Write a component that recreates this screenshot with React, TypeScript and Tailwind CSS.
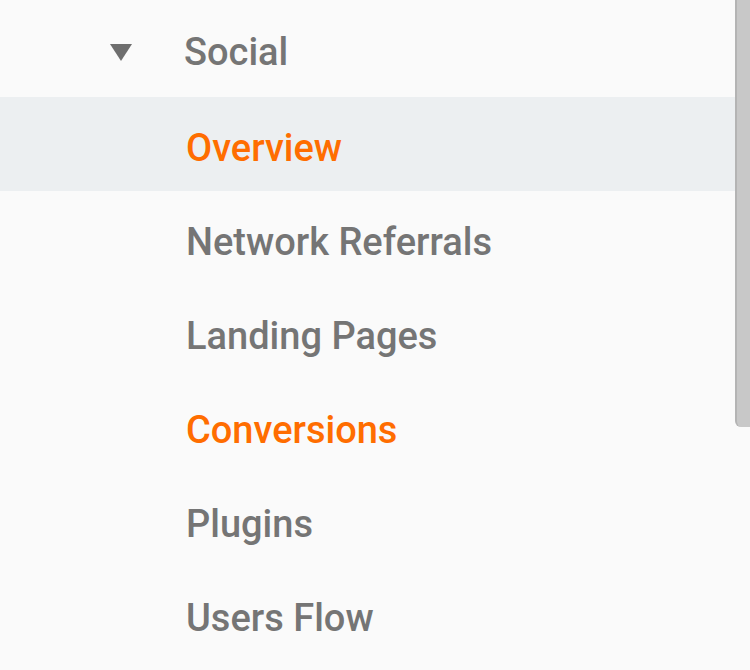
import React from 'react';

interface NavItem {
  label: string;
  active?: boolean;
  selected?: boolean;
}

const ITEMS: NavItem[] = [
  { label: 'Overview', active: true, selected: true },
  { label: 'Network Referrals' },
  { label: 'Landing Pages' },
  { label: 'Conversions', active: true },
  { label: 'Plugins' },
  { label: 'Users Flow' },
];

const App: React.FC = () => {
  return (
    <div
      className="relative w-[750px] h-[670px] overflow-hidden bg-[#fafafa]"
      style={{ fontFamily: 'Roboto, "Liberation Sans", sans-serif' }}
    >
      {/* section header */}
      <div className="h-[97px] flex items-center pt-[6px]">
        <div className="w-[184px] flex pl-[110px]">
          <svg width="22" height="17" viewBox="0 0 22 17" className="mt-[2px]">
            <path d="M0 0 H22 L11 17 Z" fill="#6e6e6e" />
          </svg>
        </div>
        <span className="text-[38px] font-medium leading-none text-[#757575]">Social</span>
      </div>

      {/* items */}
      <div className="flex flex-col">
        {ITEMS.map((item) => (
          <div
            key={item.label}
            className={`h-[94px] flex items-center pt-[7px] pl-[186px] ${item.selected ? 'bg-[#eceff1]' : ''}`}
          >
            <span
              className={`text-[38px] font-medium leading-none ${item.active ? 'text-[#ff6d00]' : 'text-[#757575]'}`}
            >
              {item.label}
            </span>
          </div>
        ))}
      </div>

      {/* scrollbar thumb */}
      <div className="absolute right-0 top-0 w-[15px] h-[427px] bg-[#c8c8c8] border-l-2 border-[#b4b4b4] rounded-bl-[6px]" />
    </div>
  );
};

export default App;
